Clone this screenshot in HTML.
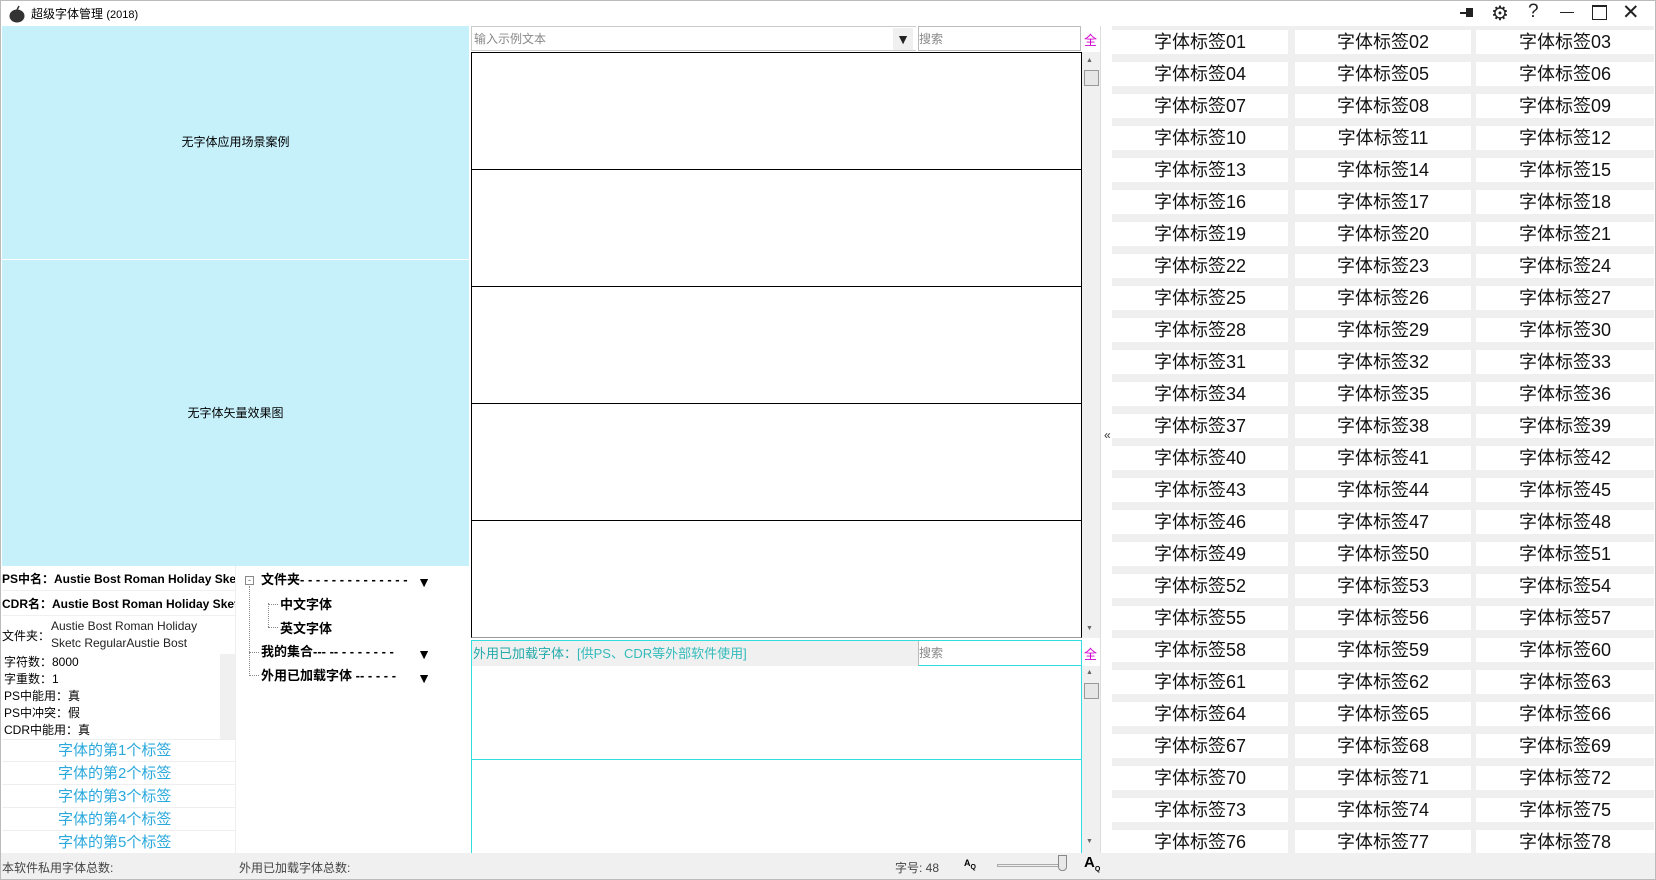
<!DOCTYPE html>
<html><head><meta charset="utf-8"><style>
*{margin:0;padding:0;box-sizing:border-box}
body{width:1656px;height:880px;overflow:hidden;background:#fff;font-family:"Liberation Sans","Noto Sans CJK SC",sans-serif;position:relative;font-size:12px;color:#000}
.a{position:absolute}
.cell{position:absolute;height:24px;width:176px;background:#fff;text-align:center;font-size:18px;line-height:24px;color:#111}
.hl{position:absolute;left:471px;width:610px;height:1px;background:#000}
.tag{position:absolute;left:2px;width:233px;height:22px;border-bottom:1px solid #eee;color:#2aa8dc;font-size:15px;line-height:22px;padding-left:56px}
.tr{position:absolute;left:261px;font-weight:bold;font-size:13px;white-space:pre;width:170px;height:18px;line-height:18px}
.tr b{position:absolute;right:0;top:2px;font-size:14px;line-height:18px}
</style></head><body>
<div class="a" style="left:0;top:0;width:1656px;height:880px;border:1px solid #bbb"></div>
<svg class="a" style="left:8px;top:5px" width="18" height="18" viewBox="0 0 18 18"><ellipse cx="9" cy="11" rx="7.5" ry="6.5" fill="#333"/><path d="M9 5 L11 1" stroke="#333" stroke-width="1.5"/></svg>
<div class="a" style="left:31px;top:5px;font-size:12px">超级字体管理 <span style="font-size:11px">(2018)</span></div>
<svg class="a" style="left:1460px;top:6px" width="16" height="14"><rect x="6" y="2" width="7" height="9" fill="#222"/><rect x="0" y="6" width="8" height="2" fill="#222"/></svg>
<div class="a" style="left:1491px;top:1px;font-size:20px;color:#222">⚙</div>
<div class="a" style="left:1528px;top:1px;font-size:19px;color:#222">?</div>
<div class="a" style="left:1560px;top:12px;width:14px;height:1px;background:#222"></div>
<div class="a" style="left:1592px;top:5px;width:15px;height:15px;border:1.5px solid #222;border-top-width:2.5px"></div>
<div class="a" style="left:1622px;top:0px;font-size:21px;color:#222">✕</div>
<div class="a" style="left:2px;top:26px;width:467px;height:233px;background:#c6f1fb;text-align:center;line-height:233px;font-size:12px">无字体应用场景案例</div>
<div class="a" style="left:2px;top:260px;width:467px;height:306px;background:#c6f1fb;text-align:center;line-height:306px;font-size:12px">无字体矢量效果图</div>
<div class="a" style="left:2px;top:568px;width:233px;height:23px;font-weight:bold;font-size:12px;line-height:23px;white-space:nowrap;overflow:hidden;border-bottom:1px solid #f0f0f0">PS中名：Austie Bost Roman Holiday Sketc</div>
<div class="a" style="left:2px;top:593px;width:233px;height:23px;font-weight:bold;font-size:12px;line-height:23px;white-space:nowrap;overflow:hidden;border-bottom:1px solid #f0f0f0">CDR名：Austie Bost Roman Holiday Sketc</div>
<div class="a" style="left:2px;top:620px;font-size:12px;line-height:32px">文件夹：</div>
<div class="a" style="left:51px;top:618px;font-size:12px;line-height:17px;color:#222">Austie Bost Roman Holiday<br>Sketc RegularAustie Bost</div>
<div class="a" style="left:4px;top:654px;font-size:12px;line-height:17px">字符数：8000<br>字重数：1<br>PS中能用：真<br>PS中冲突：假<br>CDR中能用：真</div>
<div class="a" style="left:220px;top:654px;width:15px;height:85px;background:#f0f0f0"></div>
<div class="a" style="left:2px;top:739px;width:233px;height:1px;background:#eee"></div>
<div class="tag" style="top:740px">字体的第1个标签</div>
<div class="tag" style="top:763px">字体的第2个标签</div>
<div class="tag" style="top:786px">字体的第3个标签</div>
<div class="tag" style="top:809px">字体的第4个标签</div>
<div class="tag" style="top:832px">字体的第5个标签</div>
<div class="a" style="left:235px;top:566px;width:1px;height:287px;background:#eee"></div>
<div class="a" style="left:245px;top:576px;width:9px;height:9px;border:1px solid #888;font-size:9px;line-height:6px;text-align:center;color:#555">-</div>
<div class="a" style="left:249px;top:586px;width:0;height:88px;border-left:1px dotted #888"></div>
<div class="a" style="left:268px;top:603px;width:0;height:24px;border-left:1px dotted #888"></div>
<div class="a" style="left:268px;top:604px;width:10px;border-top:1px dotted #888"></div>
<div class="a" style="left:268px;top:627px;width:10px;border-top:1px dotted #888"></div>
<div class="a" style="left:249px;top:652px;width:10px;border-top:1px dotted #888"></div>
<div class="a" style="left:249px;top:675px;width:10px;border-top:1px dotted #888"></div>
<div class="tr" style="top:571px">文件夹- - - - - - - - - - - - - -<b>▼</b></div>
<div class="a" style="left:280px;top:594px;font-weight:bold;font-size:13px">中文字体</div>
<div class="a" style="left:280px;top:618px;font-weight:bold;font-size:13px">英文字体</div>
<div class="tr" style="top:643px">我的集合--- -- - - - - - - - <b>▼</b></div>
<div class="tr" style="top:667px">外用已加载字体 -- - - - - <b>▼</b></div>
<div class="a" style="left:471px;top:26px;width:445px;height:25px;border:1px solid #ccc;border-right:none;color:#888;font-size:12px;line-height:24px;padding-left:2px">输入示例文本</div>
<div class="a" style="left:893px;top:28px;width:20px;height:22px;background:#f0f0f0;font-size:14px;line-height:22px;text-align:center;color:#222">▼</div>
<div class="a" style="left:918px;top:26px;width:163px;height:25px;border:1px solid #bbb;color:#888;font-size:12px;line-height:24px">搜索</div>
<div class="a" style="left:1084px;top:30px;color:#d000d0;font-size:13px">全</div>
<div class="a" style="left:471px;top:52px;width:611px;height:586px;border:1px solid #000;border-bottom-color:#999"></div>
<div class="hl" style="top:169px"></div><div class="hl" style="top:286px"></div><div class="hl" style="top:403px"></div><div class="hl" style="top:520px"></div>
<div class="a" style="left:1082px;top:52px;width:18px;height:586px;background:#f0f0f0"></div>
<div class="a" style="left:1086px;top:57px;font-size:7px;color:#666">▲</div>
<div class="a" style="left:1084px;top:70px;width:15px;height:16px;background:#e6e6e6;border:1px solid #999"></div>
<div class="a" style="left:1086px;top:625px;font-size:7px;color:#666">▼</div>
<div class="a" style="left:471px;top:640px;width:611px;height:213px;border:1px solid #3dd;border-bottom:none"></div>
<div class="a" style="left:472px;top:641px;width:446px;height:25px;background:#f0f0f0;font-size:13px;line-height:26px;color:#2aa;padding-left:1px">外用已加载字体：<span style="color:#3bb">[供PS、CDR等外部软件使用]</span></div>
<div class="a" style="left:918px;top:641px;width:163px;height:25px;border-left:1px solid #bbb;border-bottom:1px solid #3dd;color:#888;font-size:12px;line-height:25px">搜索</div>
<div class="a" style="left:472px;top:759px;width:609px;height:1px;background:#3dd"></div>
<div class="a" style="left:1084px;top:644px;color:#d000d0;font-size:13px">全</div>
<div class="a" style="left:1082px;top:666px;width:18px;height:187px;background:#f0f0f0"></div>
<div class="a" style="left:1086px;top:669px;font-size:7px;color:#666">▲</div>
<div class="a" style="left:1084px;top:683px;width:15px;height:16px;background:#e6e6e6;border:1px solid #999"></div>
<div class="a" style="left:1086px;top:838px;font-size:7px;color:#666">▼</div>
<div class="a" style="left:1100px;top:26px;width:1px;height:827px;background:#ddd"></div>
<div class="a" style="left:1104px;top:428px;font-size:12px;color:#333">«</div>
<div class="a" style="left:1112px;top:26px;width:542px;height:827px;background:#efefef"></div>
<div id="g"></div>
<div class="a" style="left:1px;top:853px;width:1654px;height:26px;background:#f0f0f0"></div>
<div class="a" style="left:2px;top:859px;font-size:12px;color:#444">本软件私用字体总数:</div>
<div class="a" style="left:239px;top:859px;font-size:12px;color:#444">外用已加载字体总数:</div>
<div class="a" style="left:895px;top:859px;font-size:12px;color:#444">字号: 48</div>
<div class="a" style="left:964px;top:858px;font-size:9px;font-weight:bold">A<sub style="font-size:7px">Q</sub></div>
<div class="a" style="left:997px;top:864px;width:66px;height:3px;border:1px solid #aaa;background:#eee"></div>
<div class="a" style="left:1058px;top:855px;width:9px;height:16px;background:#e8e8e8;border:1px solid #888;border-radius:0 0 4px 4px"></div>
<div class="a" style="left:1084px;top:854px;font-size:15px;font-weight:bold">A<sub style="font-size:7px">Q</sub></div>
<script>
var g='',xs=[1112,1295,1476];
for(var i=0;i<78;i++){var r=Math.floor(i/3),c=i%3;var n=(i+1<10?'0':'')+(i+1);
g+='<div class="cell" style="left:'+xs[c]+'px;top:'+(30+r*32)+'px;width:'+(c==2?178:176)+'px">字体标签'+n+'</div>';}
document.getElementById('g').outerHTML=g;
</script>
</body></html>
